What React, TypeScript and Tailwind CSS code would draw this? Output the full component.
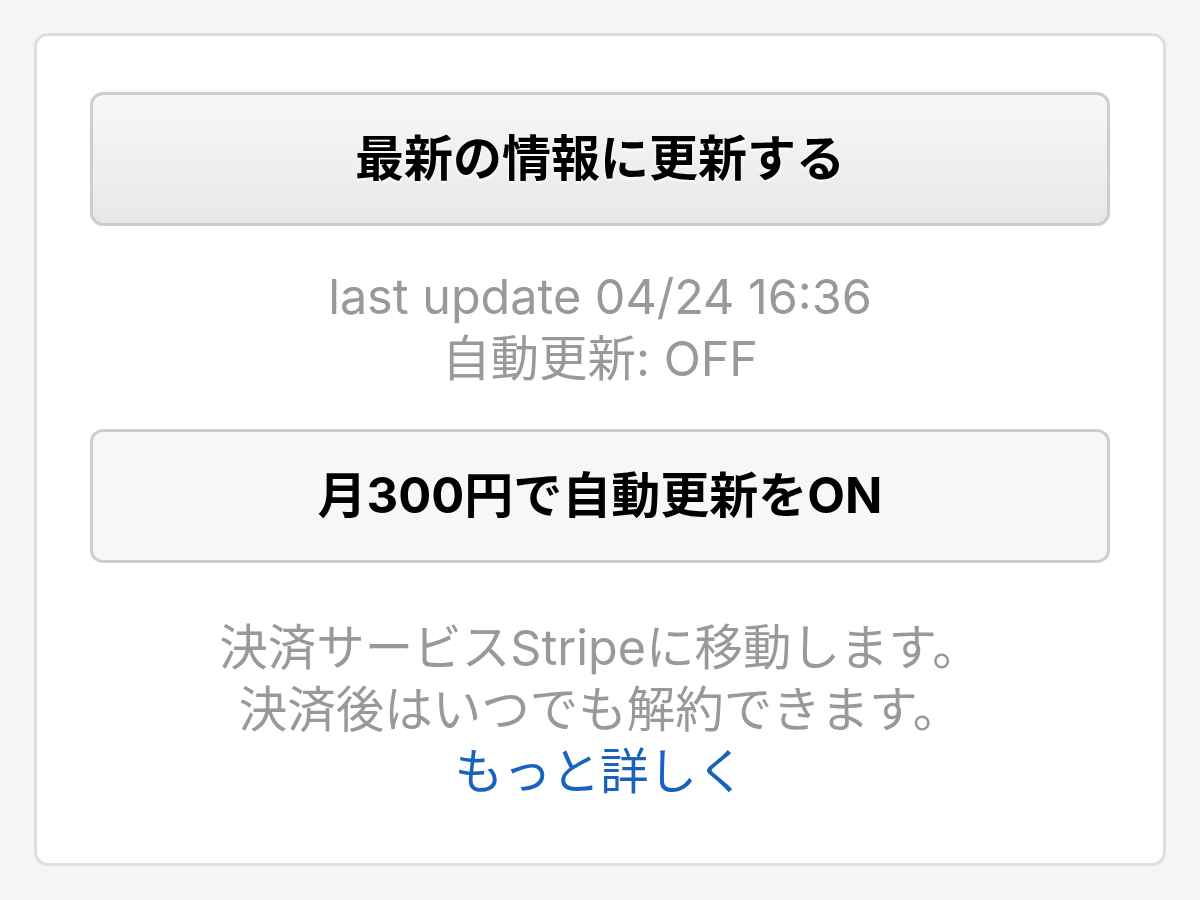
export default function App() {
  const sans = '[font-family:Inter,"Noto_Sans_CJK_JP",sans-serif]';
  return (
    <div className={`min-h-[900px] w-full bg-[#f4f5f7] px-[34px] pt-[33px] ${sans}`}>
      <div className="flex h-[833px] flex-col items-stretch rounded-[14px] border-[3px] border-[#dddee1] bg-white px-[53px] pt-[56px]">
        <button className="flex h-[134px] items-center justify-center rounded-[13px] border-[3px] border-[#cdcdcd] bg-gradient-to-b from-[#f7f7f7] to-[#e8e8e8] text-[49px] font-bold text-black [text-shadow:0_2px_3px_#fff]">
          最新の情報に更新する
        </button>
        <div className="mt-[40px] text-center text-[48.5px] leading-[62px] text-[#999999]">
          <p>last update 04/24 16:36</p>
          <p>自動更新: OFF</p>
        </div>
        <button className="mt-[39px] flex h-[134px] items-center justify-center rounded-[13px] border-[3px] border-[#cdcdcd] bg-[#f7f7f7] text-[49px] font-bold text-black">
          月300円で自動更新をON
        </button>
        <div className="mt-[54px] text-center text-[48.5px] leading-[62px] text-[#999999]">
          <p>決済サービスStripeに移動します。</p>
          <p>決済後はいつでも解約できます。</p>
          <p>
            <a className="text-[#1a63bd]">もっと詳しく</a>
          </p>
        </div>
      </div>
    </div>
  );
}
